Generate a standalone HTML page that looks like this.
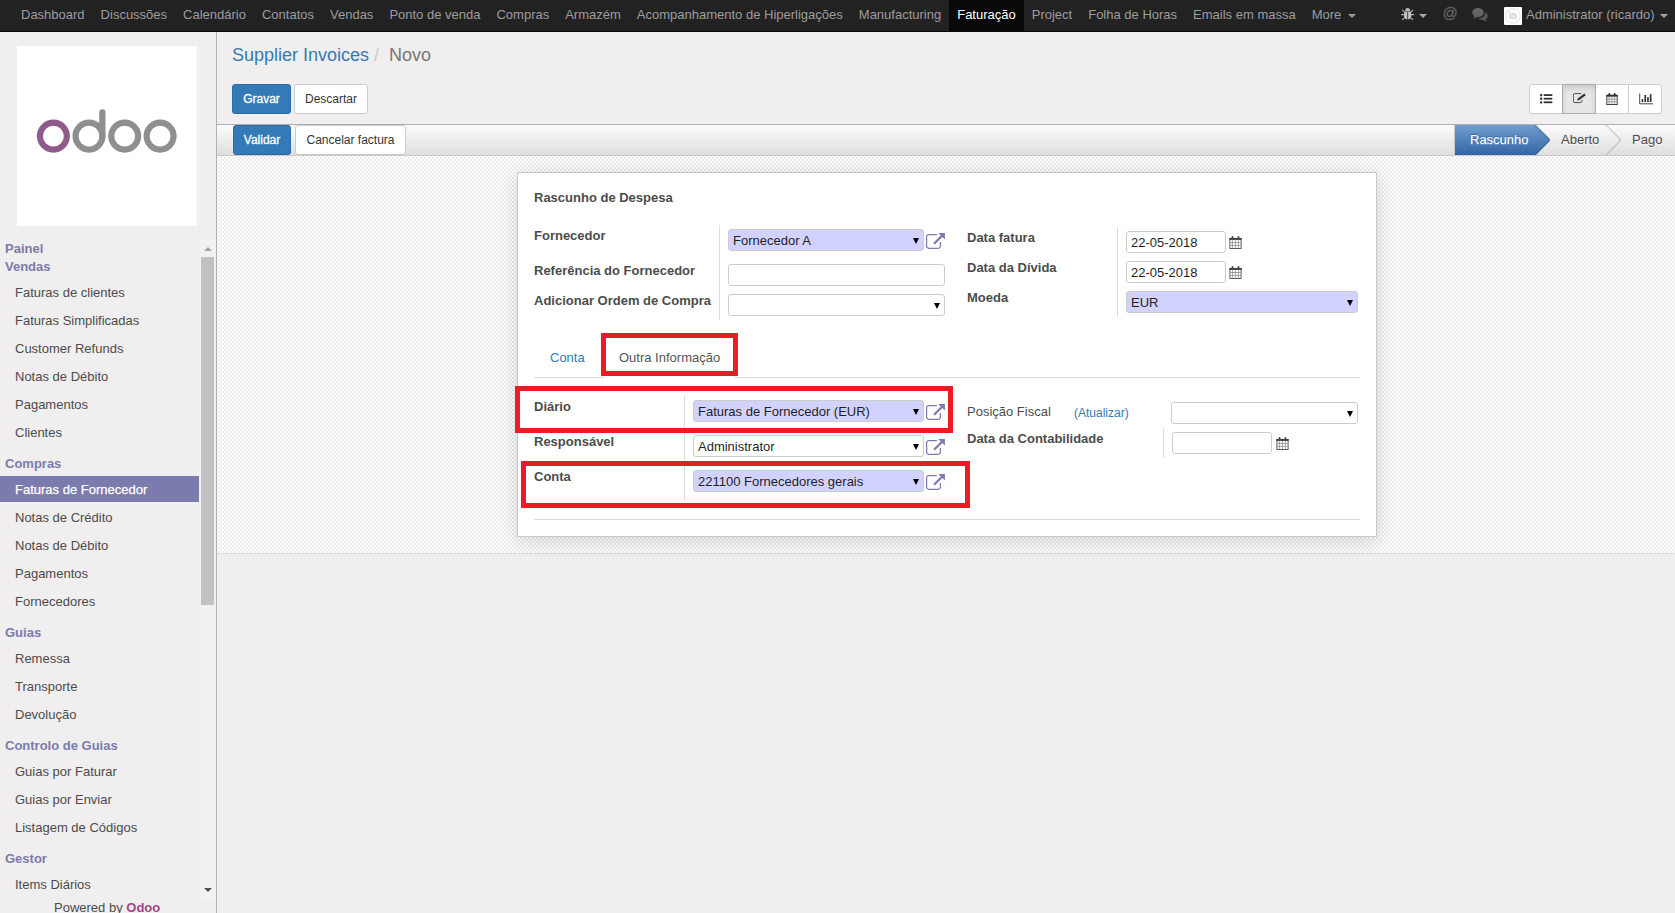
<!DOCTYPE html>
<html>
<head>
<meta charset="utf-8">
<title>Odoo</title>
<style>
*{box-sizing:border-box;}
html,body{margin:0;padding:0;}
body{width:1675px;height:913px;overflow:hidden;position:relative;background:#f0eeee;font-family:"Liberation Sans",sans-serif;font-size:13px;color:#4c4c4c;line-height:18px;}
.abs{position:absolute;}
/* NAVBAR */
#nav{position:absolute;left:0;top:0;width:1675px;height:32px;background:#222;border-bottom:1px solid #080808;}
#nav .menu{position:absolute;left:13px;top:0;height:31px;display:flex;}
#nav .it{height:31px;line-height:30px;padding:0 8px;color:#9d9d9d;font-size:13px;white-space:nowrap;}
#nav .act{background:#080808;color:#fff;}
#nav .caret{display:inline-block;width:0;height:0;border-left:4px solid transparent;border-right:4px solid transparent;border-top:4px solid #9d9d9d;vertical-align:middle;margin-left:3px;}
/* SIDEBAR */
#side{position:absolute;left:0;top:32px;width:217px;height:881px;border-right:1px solid #afafb7;background:#f0eeee;}
#logo{position:absolute;left:17px;top:14px;width:180px;height:180px;background:#fff;}
.sec{position:absolute;left:5px;font-weight:bold;color:#7c7bad;font-size:13px;white-space:nowrap;line-height:18px;}
.mi{position:absolute;left:15px;color:#4c4c4c;font-size:13px;white-space:nowrap;line-height:18px;}
/* MAIN */
.btn{position:absolute;height:30px;border-radius:3px;font-size:12px;line-height:18px;padding:5px 10px;border:1px solid #ccc;background:#fff;color:#333;white-space:nowrap;text-align:center;}
.btn.pri{background:#337ab7;border-color:#2e6da4;color:#fff;-webkit-text-stroke:0.3px #fff;}
#hdr{position:absolute;left:217px;top:124px;width:1458px;height:32px;border-top:1px solid #afafb6;border-bottom:1px solid #cacaca;background:linear-gradient(to bottom,#fcfcfc,#dedede);}
#sheetbg{position:absolute;left:217px;top:156px;width:1458px;height:398px;border-bottom:1px solid #ddd;background:conic-gradient(#ececec 90deg,#fff 90deg 180deg,#ececec 180deg 270deg,#fff 270deg) 1px 1px/4px 4px;}
#sheet{position:absolute;left:517px;top:172px;width:860px;height:365px;background:#fff;border:1px solid #c8c8d3;box-shadow:0 4px 20px rgba(0,0,0,0.15);}
.lbl{position:absolute;font-weight:bold;white-space:nowrap;color:#4c4c4c;font-size:13px;line-height:18px;}
.fld{position:absolute;height:22px;border:1px solid #ccc;border-radius:3px;background:#fff;font-size:13px;line-height:20px;padding:1px 4px 0;color:#1f1f1f;white-space:nowrap;overflow:hidden;}
.fld.req{background:#d2d2ff;}
.fld .car{position:absolute;right:4px;top:8px;width:0;height:0;border-left:3.5px solid transparent;border-right:3.5px solid transparent;border-top:6px solid #000;}
.vsep{position:absolute;width:1px;background:#ddd;}
.hsep{position:absolute;height:1px;background:#ddd;}
.red{position:absolute;border:5px solid #ed1c24;}

.vs{position:absolute;top:84px;width:34px;height:30px;border:1px solid #ccc;background:#fff;}
.vs.on{background:#e6e6e6;border-color:#adadad;box-shadow:inset 0 3px 5px rgba(0,0,0,0.125);z-index:2;}
.vs svg{position:absolute;}
.st{position:absolute;top:0;height:30px;line-height:30px;font-size:13px;white-space:nowrap;color:#4c4c4c;text-shadow:0 1px 1px #fcfcfc,0 -1px 1px #dedede;}
.arw{position:absolute;top:0;width:17px;height:30px;overflow:hidden;}
.arw span{position:absolute;left:-12px;top:3px;width:24px;height:24px;border-radius:3px;transform:rotate(45deg);background:linear-gradient(135deg,#fcfcfc,#dedede);box-shadow:-1px 1px 2px rgba(255,255,255,0.2),inset -1px 1px 1px rgba(0,0,0,0.2);}
</style>
</head>
<body>
<div id="nav"><div class="menu"><div class="it">Dashboard</div><div class="it">Discussões</div><div class="it">Calendário</div><div class="it">Contatos</div><div class="it">Vendas</div><div class="it">Ponto de venda</div><div class="it">Compras</div><div class="it">Armazém</div><div class="it">Acompanhamento de Hiperligações</div><div class="it">Manufacturing</div><div class="it act">Faturação</div><div class="it">Project</div><div class="it">Folha de Horas</div><div class="it">Emails em massa</div><div class="it">More <span class="caret"></span></div></div>
<svg class="abs" style="left:1401px;top:7px" width="14" height="14" viewBox="0 0 14 14"><g stroke="#b4b4b4" stroke-width="1.1" fill="none"><path d="M1.1 2.9 L3.6 5 M12.2 2.9 L9.7 5 M0.1 7.6 H3.4 M13.2 7.6 H9.9 M1.1 12.9 L3.5 10.9 M12.2 12.9 L9.8 10.9"/></g><path d="M4.1 4.4 A2.55 3.4 0 0 1 9.2 4.4 Z" fill="#b9b9b9"/><path d="M3.1 5 H10.2 V9.4 A3.55 2.8 0 0 1 3.1 9.4 Z" fill="#c4c4c4"/><rect x="6.15" y="5.2" width="1" height="7" fill="#5a2a66"/></svg>
<div class="abs" style="left:1419px;top:14px;width:0;height:0;border-left:4px solid transparent;border-right:4px solid transparent;border-top:4px solid #a8a8a8"></div>
<div class="abs" style="left:1442.5px;top:2px;font-size:15px;line-height:22px;color:#606060;-webkit-text-stroke:0.35px #606060">@</div>
<svg class="abs" style="left:1471px;top:6.5px" width="20" height="15" viewBox="0 0 18 14"><path d="M11.6 5.2 C11.6 2.9 9.2 1 6.2 1 C3.2 1 0.8 2.9 0.8 5.2 C0.8 6.5 1.6 7.7 2.8 8.5 C2.6 9.3 2.1 10 1.5 10.5 C2.9 10.5 4.1 10 5 9.3 C5.4 9.35 5.8 9.4 6.2 9.4 C9.2 9.4 11.6 7.5 11.6 5.2 Z" fill="#646464"/><path d="M12.8 4.6 C12.85 4.9 12.85 5.1 12.85 5.3 C12.85 8.2 9.9 10.6 6.4 10.6 C7.4 11.7 9.1 12.3 10.9 12.2 C11.8 12.9 13.1 13.4 14.6 13.4 C14 12.9 13.5 12.2 13.3 11.5 C14.5 10.8 15.4 9.7 15.4 8.4 C15.4 6.8 14.3 5.4 12.8 4.6 Z" fill="#555"/></svg>
<div class="abs" style="left:1504px;top:7px;width:18px;height:18px;background:#fff;border-radius:1px"><svg width="18" height="18" viewBox="0 0 18 18"><circle cx="9" cy="9" r="7.2" fill="none" stroke="#e3e3e3" stroke-width="1"/><rect x="5.2" y="6.6" width="7.6" height="5.4" rx="0.8" fill="#dcdcdc"/><rect x="7.4" y="5.6" width="3.2" height="1.4" fill="#dcdcdc"/><circle cx="9" cy="9.3" r="1.5" fill="#ececec"/><path d="M3.9 3.9 L14.1 14.1" stroke="#e6e6e6" stroke-width="1"/></svg></div>
<div class="abs" style="left:1526px;top:0;line-height:30px;font-size:13px;color:#9d9d9d;white-space:nowrap">Administrator (ricardo)</div>
<div class="abs" style="left:1660px;top:14px;width:0;height:0;border-left:4px solid transparent;border-right:4px solid transparent;border-top:4px solid #a8a8a8"></div>
</div>
<div id="side"><div id="logo"><svg width="180" height="180" viewBox="0 0 180 180"><g fill="none" stroke-width="6.1"><circle cx="36.4" cy="90.1" r="13.5" stroke="#8f5b89"/><circle cx="72" cy="90.1" r="13.5" stroke="#8f8f8f"/><path d="M85.35 66.4 V90.1" stroke="#8f8f8f" stroke-width="6.3" stroke-linecap="round"/><circle cx="107.7" cy="90.1" r="13.5" stroke="#8f8f8f"/><circle cx="143.1" cy="90.1" r="13.5" stroke="#8f8f8f"/></g></svg></div>
<div class="abs" style="left:0;top:444px;width:199px;height:26px;background:#7c7bad"></div>
<div class="sec" style="top:208.4px">Painel</div><div class="sec" style="top:225.7px">Vendas</div><div class="sec" style="top:422.5px">Compras</div><div class="sec" style="top:591.5px">Guias</div><div class="sec" style="top:704.5px">Controlo de Guias</div><div class="sec" style="top:817.5px">Gestor</div>
<div class="mi" style="top:252.0px">Faturas de clientes</div><div class="mi" style="top:280.0px">Faturas Simplificadas</div><div class="mi" style="top:308.0px">Customer Refunds</div><div class="mi" style="top:336.0px">Notas de Débito</div><div class="mi" style="top:364.0px">Pagamentos</div><div class="mi" style="top:392.0px">Clientes</div><div class="mi" style="top:448.5px;color:#fff;-webkit-text-stroke:0.25px #fff">Faturas de Fornecedor</div><div class="mi" style="top:476.5px">Notas de Crédito</div><div class="mi" style="top:504.5px">Notas de Débito</div><div class="mi" style="top:532.5px">Pagamentos</div><div class="mi" style="top:560.5px">Fornecedores</div><div class="mi" style="top:617.5px">Remessa</div><div class="mi" style="top:645.5px">Transporte</div><div class="mi" style="top:673.5px">Devolução</div><div class="mi" style="top:730.5px">Guias por Faturar</div><div class="mi" style="top:758.5px">Guias por Enviar</div><div class="mi" style="top:786.5px">Listagem de Códigos</div><div class="mi" style="top:843.5px">Items Diários</div>
<div class="abs" style="left:199px;top:208px;width:17px;height:659px;background:#f1f1f1"></div><div class="abs" style="left:201px;top:225px;width:13px;height:348px;background:#c1c1c1"></div><div class="abs" style="left:204px;top:215px;width:0;height:0;border-left:4px solid transparent;border-right:4px solid transparent;border-bottom:4px solid #a3a3a3"></div><div class="abs" style="left:203.5px;top:856px;width:0;height:0;border-left:4px solid transparent;border-right:4px solid transparent;border-top:4.5px solid #505050"></div>
<div class="abs" style="left:0;top:867px;width:216px;height:18px;background:#f0eeee"></div><div class="abs" style="left:54px;top:867px;white-space:nowrap;font-size:13px;line-height:18px;color:#4c4c4c">Powered by <span style="color:#a24689;font-weight:bold">Odoo</span></div>
</div>
<div class="abs" style="left:232px;top:42px;font-size:18px;line-height:26px;white-space:nowrap;color:#777"><span style="color:#337ab7">Supplier Invoices</span><span style="color:#ccc;padding:0 5px">/&nbsp;</span>Novo</div>
<div class="btn pri" style="left:232px;top:84px;width:59px">Gravar</div>
<div class="btn" style="left:294px;top:84px;width:74px">Descartar</div>
<div class="vs" style="left:1529px;border-radius:3px 0 0 3px"><svg style="left:10px;top:9px" width="13" height="11" viewBox="0 0 13 11"><g fill="#333"><rect x="0" y="0" width="2.2" height="2.2" rx="0.6"/><rect x="0" y="3.6" width="2.2" height="2.2" rx="0.6"/><rect x="0" y="7.2" width="2.2" height="2.2" rx="0.6"/><rect x="3.7" y="0.2" width="8.6" height="1.8"/><rect x="3.7" y="3.8" width="8.6" height="1.8"/><rect x="3.7" y="7.4" width="8.6" height="1.8"/></g></svg></div>
<div class="vs on" style="left:1562px"><svg style="left:10px;top:7px" width="14" height="12" viewBox="0 0 14 12"><path d="M8.2 1.6 H1.9 A1.6 1.6 0 0 0 0.3 3.2 V9 A1.6 1.6 0 0 0 1.9 10.6 H7.4 A1.6 1.6 0 0 0 9 9 V7.8" fill="none" stroke="#4a4a4a" stroke-width="1"/><path d="M4.1 8.4 L4.9 6.3 L11.4 1.5 L12.8 3.3 L6.3 8.1 Z" fill="#333"/></svg></div>
<div class="vs" style="left:1595px"><svg style="left:10px;top:8px" width="12" height="12" viewBox="0 0 13 13"><rect x="0.9" y="2.4" width="11.2" height="10.1" fill="#fff" stroke="#333" stroke-width="1"/><rect x="0.45" y="2" width="12.1" height="2" fill="#333"/><rect x="2.5" y="0" width="2.1" height="3.2" rx="1" fill="#333"/><rect x="8.4" y="0" width="2.1" height="3.2" rx="1" fill="#333"/><g stroke="#666" stroke-width="0.65"><path d="M1.3 6.6 H11.7 M1.3 9.5 H11.7 M3.4 4 V12 M6.4 4 V12 M9.4 4 V12"/></g></svg></div>
<div class="vs" style="left:1628px;border-radius:0 3px 3px 0"><svg style="left:10px;top:8px" width="15" height="12" viewBox="0 0 15 12"><path d="M0.7 0.6 V10.8 H14" fill="none" stroke="#333" stroke-width="0.9"/><g fill="#333"><rect x="2.6" y="6.1" width="1.7" height="2.9"/><rect x="5.4" y="2" width="1.7" height="7"/><rect x="8.1" y="4.1" width="1.7" height="4.9"/><rect x="10.8" y="1.2" width="1.7" height="7.8"/></g></svg></div>

<div id="hdr"><div class="btn pri" style="left:16px;top:0;width:58px;padding-left:0;padding-right:0;text-shadow:none">Validar</div>
<div class="btn" style="left:78px;top:0;width:111px;padding-left:0;padding-right:0">Cancelar factura</div>
<div class="abs" style="left:1237px;top:0;width:80px;height:30px;background:linear-gradient(to bottom,#729fcf,#3465a4);border-left:1px solid #cacaca"></div>
<div class="arw" style="left:1317px"><span style="background:linear-gradient(135deg,#729fcf,#3465a4)"></span></div>
<div class="st" style="left:1253px;color:#fff;text-shadow:0 1px 1px #729fcf,0 -1px 1px #3465a4">Rascunho</div>
<div class="st" style="left:1344px">Aberto</div>
<div class="arw" style="left:1388px"><span></span></div>
<div class="st" style="left:1415px">Pago</div>

</div>
<div id="sheetbg"></div>
<div id="sheet">
<div class="lbl" style="left:16px;top:16.1px">Rascunho de Despesa</div>
<div class="lbl" style="left:16px;top:53.7px">Fornecedor</div>
<div class="lbl" style="left:16px;top:88.7px">Referência do Fornecedor</div>
<div class="lbl" style="left:16px;top:118.7px">Adicionar Ordem de Compra</div>
<div class="vsep" style="left:201px;top:52px;height:95px"></div>
<div class="fld req" style="left:210px;top:56px;width:196px">Fornecedor A<span class="car"></span></div>
<svg class="abs" style="left:408px;top:59px" width="20" height="18" viewBox="0 0 20 18"><path d="M10.9 2.5 H2.8 A2.2 2.2 0 0 0 0.6 4.7 V14.1 A2.2 2.2 0 0 0 2.8 16.3 H12.2 A2.2 2.2 0 0 0 14.4 14.1 V9.9" fill="none" stroke="#7c7bad" stroke-width="1.25"/><path d="M12.2 0.9 H18.9 V7.6 L16.36 5.01 L8.86 12.51 L7.24 10.89 L14.74 3.39 Z" fill="#7c7bad"/></svg>
<div class="fld" style="left:210px;top:91px;width:217px"></div>
<div class="fld" style="left:210px;top:121px;width:217px"><span class="car"></span></div>
<div class="lbl" style="left:449px;top:55.7px">Data fatura</div>
<div class="lbl" style="left:449px;top:85.7px">Data da Dívida</div>
<div class="lbl" style="left:449px;top:115.7px">Moeda</div>
<div class="vsep" style="left:599px;top:54px;height:90px"></div>
<div class="fld" style="left:608px;top:58px;width:100px">22-05-2018</div>
<svg class="abs" style="left:711px;top:63px" width="13" height="13" viewBox="0 0 13 13"><rect x="0.9" y="2.4" width="11.2" height="10.1" fill="#fff" stroke="#4a4a4a" stroke-width="0.9"/><rect x="0.45" y="2" width="12.1" height="1.9" fill="#3c3c3c"/><rect x="2.6" y="0" width="1.9" height="3.2" rx="0.9" fill="#4a4a4a"/><rect x="8.5" y="0" width="1.9" height="3.2" rx="0.9" fill="#4a4a4a"/><g stroke="#6e6e6e" stroke-width="0.6"><path d="M1.3 6.5 H11.7 M1.3 9.4 H11.7 M3.4 4 V12 M6.4 4 V12 M9.4 4 V12"/></g></svg>
<div class="fld" style="left:608px;top:88px;width:100px">22-05-2018</div>
<svg class="abs" style="left:711px;top:93px" width="13" height="13" viewBox="0 0 13 13"><rect x="0.9" y="2.4" width="11.2" height="10.1" fill="#fff" stroke="#4a4a4a" stroke-width="0.9"/><rect x="0.45" y="2" width="12.1" height="1.9" fill="#3c3c3c"/><rect x="2.6" y="0" width="1.9" height="3.2" rx="0.9" fill="#4a4a4a"/><rect x="8.5" y="0" width="1.9" height="3.2" rx="0.9" fill="#4a4a4a"/><g stroke="#6e6e6e" stroke-width="0.6"><path d="M1.3 6.5 H11.7 M1.3 9.4 H11.7 M3.4 4 V12 M6.4 4 V12 M9.4 4 V12"/></g></svg>
<div class="fld req" style="left:608px;top:118px;width:232px">EUR<span class="car"></span></div>
<div class="hsep" style="left:16px;top:204px;width:826px"></div>
<div class="abs" style="left:32px;top:176.2px;color:#337ab7;white-space:nowrap">Conta</div>
<div class="abs" style="left:85px;top:164px;width:133px;height:41px;background:#fff;border:1px solid #ddd;border-bottom-color:#fff;border-radius:3px 3px 0 0"></div>
<div class="abs" style="left:101px;top:176.2px;color:#555;white-space:nowrap">Outra Informação</div>
<div class="red" style="left:83px;top:160px;width:137px;height:43px"></div>
<div class="lbl" style="left:16px;top:225.3px">Diário</div>
<div class="lbl" style="left:16px;top:260.3px">Responsável</div>
<div class="lbl" style="left:16px;top:295.4px">Conta</div>
<div class="vsep" style="left:166px;top:222px;height:106px"></div>
<div class="fld req" style="left:175px;top:227px;width:231px">Faturas de Fornecedor (EUR)<span class="car"></span></div>
<svg class="abs" style="left:408px;top:230px" width="20" height="18" viewBox="0 0 20 18"><path d="M10.9 2.5 H2.8 A2.2 2.2 0 0 0 0.6 4.7 V14.1 A2.2 2.2 0 0 0 2.8 16.3 H12.2 A2.2 2.2 0 0 0 14.4 14.1 V9.9" fill="none" stroke="#7c7bad" stroke-width="1.25"/><path d="M12.2 0.9 H18.9 V7.6 L16.36 5.01 L8.86 12.51 L7.24 10.89 L14.74 3.39 Z" fill="#7c7bad"/></svg>
<div class="fld" style="left:175px;top:262px;width:231px">Administrator<span class="car"></span></div>
<svg class="abs" style="left:408px;top:265px" width="20" height="18" viewBox="0 0 20 18"><path d="M10.9 2.5 H2.8 A2.2 2.2 0 0 0 0.6 4.7 V14.1 A2.2 2.2 0 0 0 2.8 16.3 H12.2 A2.2 2.2 0 0 0 14.4 14.1 V9.9" fill="none" stroke="#7c7bad" stroke-width="1.25"/><path d="M12.2 0.9 H18.9 V7.6 L16.36 5.01 L8.86 12.51 L7.24 10.89 L14.74 3.39 Z" fill="#7c7bad"/></svg>
<div class="fld req" style="left:175px;top:297px;width:231px">221100 Fornecedores gerais<span class="car"></span></div>
<svg class="abs" style="left:408px;top:300px" width="20" height="18" viewBox="0 0 20 18"><path d="M10.9 2.5 H2.8 A2.2 2.2 0 0 0 0.6 4.7 V14.1 A2.2 2.2 0 0 0 2.8 16.3 H12.2 A2.2 2.2 0 0 0 14.4 14.1 V9.9" fill="none" stroke="#7c7bad" stroke-width="1.25"/><path d="M12.2 0.9 H18.9 V7.6 L16.36 5.01 L8.86 12.51 L7.24 10.89 L14.74 3.39 Z" fill="#7c7bad"/></svg>
<div class="red" style="left:-3px;top:213px;width:438px;height:47px"></div>
<div class="red" style="left:3px;top:288px;width:449px;height:47px"></div>
<div class="lbl" style="left:449px;top:229.9px;font-weight:normal">Posição Fiscal</div>
<div class="abs" style="left:556px;top:231.1px;color:#337ab7;font-size:12px;white-space:nowrap">(Atualizar)</div>
<div class="fld" style="left:653px;top:229px;width:187px"><span class="car"></span></div>
<div class="lbl" style="left:449px;top:257.1px">Data da Contabilidade</div>
<div class="vsep" style="left:645px;top:255px;height:30px"></div>
<div class="fld" style="left:654px;top:259px;width:100px"></div>
<svg class="abs" style="left:758px;top:264px" width="13" height="13" viewBox="0 0 13 13"><rect x="0.9" y="2.4" width="11.2" height="10.1" fill="#fff" stroke="#4a4a4a" stroke-width="0.9"/><rect x="0.45" y="2" width="12.1" height="1.9" fill="#3c3c3c"/><rect x="2.6" y="0" width="1.9" height="3.2" rx="0.9" fill="#4a4a4a"/><rect x="8.5" y="0" width="1.9" height="3.2" rx="0.9" fill="#4a4a4a"/><g stroke="#6e6e6e" stroke-width="0.6"><path d="M1.3 6.5 H11.7 M1.3 9.4 H11.7 M3.4 4 V12 M6.4 4 V12 M9.4 4 V12"/></g></svg>
<div class="hsep" style="left:16px;top:346px;width:826px"></div>
</div>
</body>
</html>
